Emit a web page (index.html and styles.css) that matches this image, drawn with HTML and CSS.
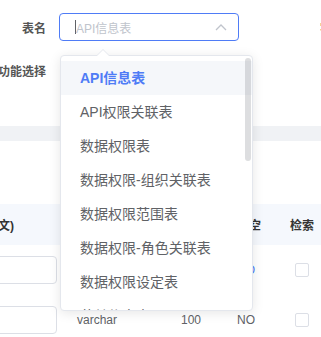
FILE: index.html
```html
<!DOCTYPE html>
<html lang="zh-CN">
<head>
    <meta charset="UTF-8">
    <meta name="viewport" content="width=device-width, initial-scale=1.0">
    <title>代码生成</title>
    <link rel="stylesheet" href="styles.css">
</head>
<body>
    <div class="page">
        <div class="form">
            <div class="form-row">
                <div class="form-label">表名</div>
                <div class="select">
                    <span class="caret"></span>
                    <span class="placeholder">API信息表</span>
                    <svg class="arrow" width="12" height="8" viewBox="0 0 12 8">
                        <path d="M1 7 L6 2 L11 7" fill="none" stroke="#c0c4cc" stroke-width="1.3"/>
                    </svg>
                </div>
                <div class="form-label next">字段名</div>
            </div>
            <div class="form-row">
                <div class="form-label">功能选择</div>
            </div>
        </div>

        <div class="band"></div>

        <div class="table">
            <div class="tr th">
                <div class="td c-desc">字段描述(中文)</div>
                <div class="td c-type">字段类型</div>
                <div class="td c-len">长度</div>
                <div class="td c-null">为空</div>
                <div class="td c-search">检索</div>
            </div>
            <div class="tr">
                <div class="td c-desc"><div class="text-input"></div></div>
                <div class="td c-type">bigint</div>
                <div class="td c-len">20</div>
                <div class="td c-null link">NO</div>
                <div class="td c-search"><span class="checkbox"></span></div>
            </div>
            <div class="tr">
                <div class="td c-desc"><div class="text-input"></div></div>
                <div class="td c-type">varchar</div>
                <div class="td c-len">100</div>
                <div class="td c-null">NO</div>
                <div class="td c-search"><span class="checkbox"></span></div>
            </div>
        </div>

        <!-- select dropdown -->
        <div class="dropdown">
            <div class="popper-arrow"></div>
            <ul class="options">
                <li class="option selected">API信息表</li>
                <li class="option">API权限关联表</li>
                <li class="option">数据权限表</li>
                <li class="option">数据权限-组织关联表</li>
                <li class="option">数据权限范围表</li>
                <li class="option">数据权限-角色关联表</li>
                <li class="option">数据权限设定表</li>
                <li class="option">菜单信息表</li>
                <li class="option">菜单权限表</li>
            </ul>
            <div class="scrollbar"></div>
        </div>
    </div>
</body>
</html>
```

FILE: styles.css
```css
body {
    margin: 0;
    font-family: "Liberation Sans", "Noto Sans CJK SC", sans-serif;
    background-color: #fff;
}
.page {
    position: relative;
    width: 321px;
    height: 337px;
    overflow: hidden;
    padding-top: 13px;
    box-sizing: border-box;
}
.form-row {
    display: flex;
    align-items: center;
    height: 28px;
    margin-bottom: 15px;
}
.form-label {
    width: 46px;
    flex-shrink: 0;
    display: flex;
    justify-content: flex-end;
    white-space: nowrap;
    margin-right: 13px;
    font-size: 12px;
    font-weight: bold;
    color: #555;
}
.form-label.next {
    justify-content: flex-start;
    margin-left: 81px;
}
.select {
    width: 180px;
    height: 28px;
    box-sizing: border-box;
    border: 1px solid #4f7cf6;
    border-radius: 4px;
    display: flex;
    align-items: center;
    padding-left: 15px;
    flex-shrink: 0;
}
.caret {
    width: 1px;
    height: 14px;
    background-color: #606266;
}
.placeholder {
    font-size: 12px;
    color: #c0c4cc;
    flex: 1;
}
.arrow {
    margin-right: 11px;
}
.band {
    margin-top: 42px;
    height: 15px;
    background-color: #f0f2f5;
}
.table {
    margin-top: 63px;
    margin-left: -76px;
    font-size: 12px;
    color: #606266;
}
.tr {
    display: flex;
    align-items: center;
    height: 50px;
}
.th {
    height: 41px;
    background-color: #f5f8fd;
    font-weight: bold;
    color: #333;
}
.td {
    box-sizing: border-box;
    padding: 0 10px;
    white-space: nowrap;
    flex-shrink: 0;
}
.c-desc {
    width: 143px;
    display: flex;
    justify-content: flex-end;
}
.th .c-desc {
    justify-content: flex-start;
}
.c-type {
    width: 104px;
}
.c-len {
    width: 56px;
}
.c-null {
    width: 53px;
}
.c-search {
    width: 60px;
}
.link {
    color: #4f7cf6;
}
.text-input {
    width: 107px;
    height: 28px;
    box-sizing: border-box;
    border: 1px solid #dcdfe6;
    border-radius: 4px;
}
.checkbox {
    display: block;
    width: 14px;
    height: 14px;
    margin-left: 5px;
    box-sizing: border-box;
    border: 1px solid #dcdfe6;
    border-radius: 2px;
}
.dropdown {
    position: absolute;
    left: 60px;
    top: 55px;
    width: 193px;
    height: 256px;
    box-sizing: border-box;
    background-color: #fff;
    border: 1px solid #e4e7ed;
    border-radius: 4px;
    box-shadow: 0 2px 12px rgba(0, 0, 0, 0.1);
}
.popper-arrow {
    position: absolute;
    left: 36px;
    top: -7px;
    width: 0;
    height: 0;
    border-left: 6px solid transparent;
    border-right: 6px solid transparent;
    border-bottom: 6px solid #e4e7ed;
}
.popper-arrow::after {
    content: "";
    position: absolute;
    left: -6px;
    top: 1px;
    border-left: 6px solid transparent;
    border-right: 6px solid transparent;
    border-bottom: 6px solid #fff;
}
.options {
    list-style: none;
    margin: 0;
    padding: 5px 0;
    height: 100%;
    box-sizing: border-box;
    overflow: hidden;
}
.option {
    height: 34px;
    line-height: 34px;
    padding: 0 19px;
    font-size: 14px;
    color: #606266;
    white-space: nowrap;
}
.option.selected {
    background-color: #f5f7fa;
    color: #4f7cf6;
    font-weight: bold;
}
.scrollbar {
    position: absolute;
    right: 1px;
    top: 2px;
    width: 6px;
    height: 103px;
    border-radius: 3px;
    background-color: rgba(144, 147, 153, 0.3);
}
```
